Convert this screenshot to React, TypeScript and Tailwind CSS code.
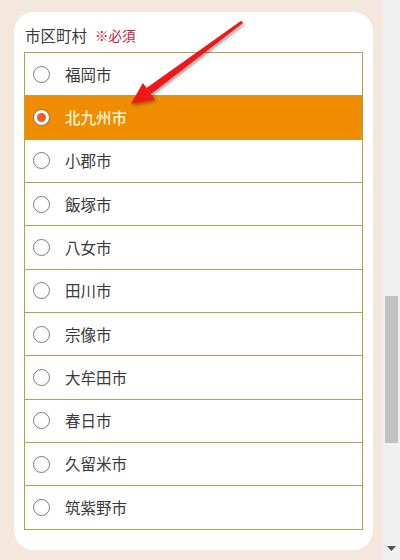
const cities = [
  "福岡市",
  "北九州市",
  "小郡市",
  "飯塚市",
  "八女市",
  "田川市",
  "宗像市",
  "大牟田市",
  "春日市",
  "久留米市",
  "筑紫野市",
];

function Radio({ checked }: { checked: boolean }) {
  if (checked) {
    return (
      <span className="flex h-[17px] w-[17px] items-center justify-center rounded-full border border-[#8a6a4a] bg-white">
        <span className="h-[9px] w-[9px] rounded-full bg-[#e2602c]" />
      </span>
    );
  }
  return <span className="h-[17px] w-[17px] rounded-full border border-[#7a7a7a] bg-white" />;
}

export default function App() {
  return (
    <div
      className="relative flex h-[560px] w-[400px] overflow-hidden bg-[#f3e7de]"
      style={{ fontFamily: '"Noto Sans CJK JP", "Noto Sans", sans-serif' }}
    >
      <div className="w-[383px] pt-[12px] pl-[14px] pr-[10px]">
        <div className="h-[538px] rounded-[20px] bg-white pt-[8px] pr-[10px] pb-[21px] pl-[10px]">
          <div className="flex h-[32px] items-center pl-[1px] text-[15.5px] leading-none text-[#3a3a3a]">
            市区町村
            <span className="ml-[8px] text-[13.5px] text-[#c4163c]">※必須</span>
          </div>
          <div className="border-t border-r border-l border-[#bb9c4a]">
            {cities.map((c, i) => {
              const on = i === 1;
              return (
                <div
                  key={c}
                  className={
                    on
                      ? "flex h-[43.33px] items-center border-b border-[#bb9c4a] bg-[#ef8c00] pl-[8px]"
                      : "flex h-[43.33px] items-center border-b border-[#bb9c4a] bg-white pl-[8px]"
                  }
                >
                  <Radio checked={on} />
                  <span
                    className={
                      on
                        ? "ml-[15px] text-[15.5px] font-medium text-[#fff3d6]"
                        : "ml-[15px] text-[15.5px] text-[#3a3a3a]"
                    }
                  >
                    {c}
                  </span>
                </div>
              );
            })}
          </div>
        </div>
      </div>

      <div className="relative w-[17px] bg-[#f0f0f0]">
        <div className="absolute top-[296px] left-[2px] h-[147px] w-[13px] bg-[#c1c1c1]" />
        <svg className="absolute top-[546px] left-[4px]" width="9" height="6" viewBox="0 0 9 6">
          <polygon points="0,0 9,0 4.5,5" fill="#505050" />
        </svg>
      </div>

      <svg className="pointer-events-none absolute top-0 left-0" width="400" height="560">
        <defs>
          <filter id="sh" x="-20%" y="-20%" width="140%" height="140%">
            <feDropShadow dx="1.5" dy="2" stdDeviation="1.5" floodColor="#000" floodOpacity="0.35" />
          </filter>
        </defs>
        <g filter="url(#sh)" fill="#f21414">
          <polygon points="243,23 241.2,20.8 146.5,88 151,94" />
          <polygon points="131,104 142.8,83 155,99.5" />
        </g>
      </svg>
    </div>
  );
}
